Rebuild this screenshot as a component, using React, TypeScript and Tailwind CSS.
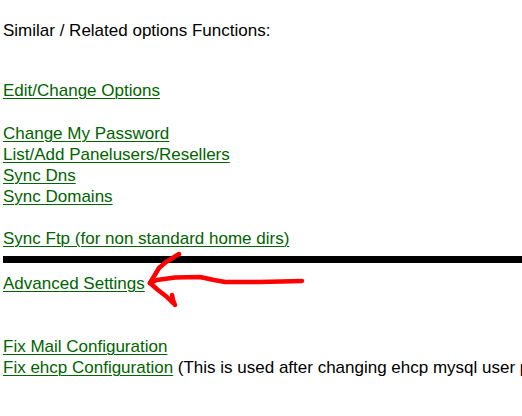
const LINK = "text-[#006400] underline underline-offset-[2px] decoration-[1px]";

function A({ children }: { children: React.ReactNode }) {
  return (
    <a href="#" className={LINK}>
      {children}
    </a>
  );
}

export default function App() {
  return (
    <div className="relative h-[416px] w-[522px] overflow-hidden bg-white font-['Liberation_Sans',Arial,sans-serif] text-[17px] leading-[21px] text-black whitespace-nowrap">
      <div className="flex flex-col pl-[3px] pt-[20px]">
        <div>Similar / Related options Functions:</div>

        <div className="mt-[39px]">
          <A>Edit/Change Options</A>
        </div>

        <div className="mt-[22px] flex flex-col">
          <div><A>Change My Password</A></div>
          <div><A>List/Add Panelusers/Resellers</A></div>
          <div><A>Sync Dns</A></div>
          <div><A>Sync Domains</A></div>
          <div className="h-[21px]" />
          <div><A>Sync Ftp (for non standard home dirs)</A></div>
        </div>

        <div className="mt-[7px] h-[7px] bg-black" />

        <div className="mt-[10px]">
          <A>Advanced Settings</A>
        </div>

        <div className="mt-[42px] flex flex-col">
          <div><A>Fix Mail Configuration</A></div>
          <div>
            <A>Fix ehcp Configuration</A> (This is used after changing ehcp mysql user pass)
          </div>
        </div>
      </div>

      {/* hand-drawn red arrow */}
      <svg
        className="pointer-events-none absolute left-0 top-0"
        width="522"
        height="416"
        viewBox="0 0 522 416"
        fill="none"
        stroke="#ff0000"
        strokeWidth="4.5"
        strokeLinecap="round"
        strokeLinejoin="round"
      >
        <path d="M179 254 L166 262 L159 268 L153 278 L150 283" />
        <path d="M150 283 L157 280 L175 277.5 L200 277 L214 280 L225 282 L260 282 L302 281" />
        <path d="M150 283 L158 290 L167 297 L173 303" />
        <path d="M172 295 L173 300 L175 305" />
      </svg>
    </div>
  );
}
